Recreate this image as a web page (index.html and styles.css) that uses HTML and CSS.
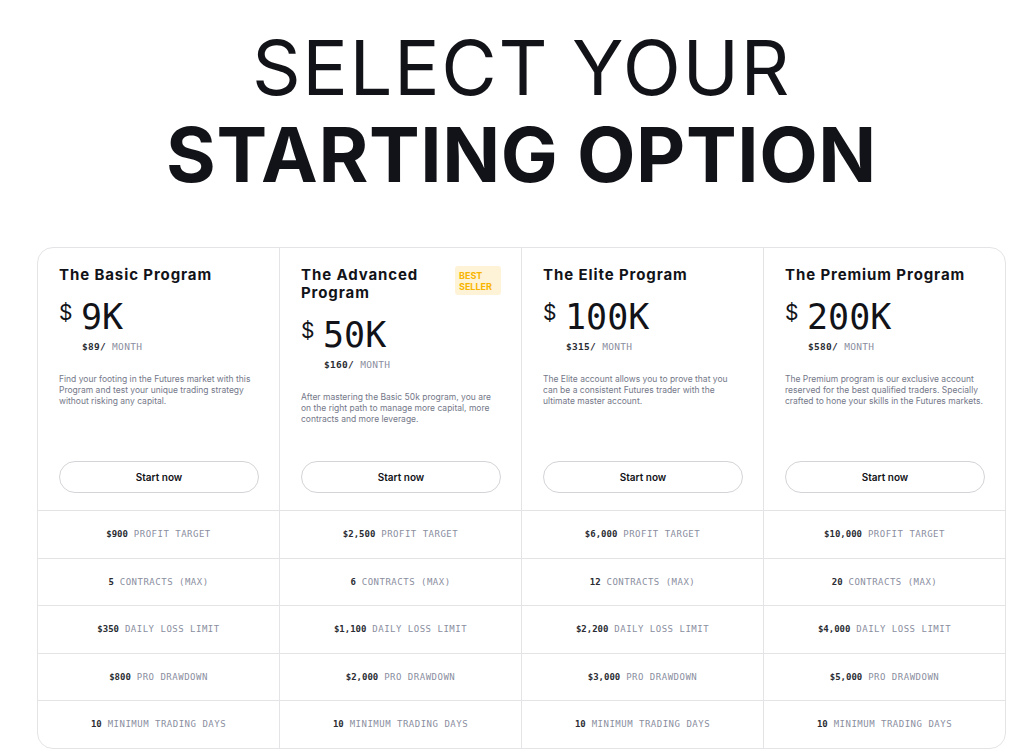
FILE: index.html
```html
<!DOCTYPE html>
<html lang="en">
<head>
<meta charset="utf-8">
<title>Select your starting option</title>
<link rel="stylesheet" href="styles.css">
</head>
<body>
<main class="page">
  <h1 class="hero">
    <span class="hero-light">SELECT YOUR</span>
    <span class="hero-bold">STARTING OPTION</span>
  </h1>

  <section class="plans">
    <article class="plan">
      <div class="plan-head">
        <div class="plan-top">
          <h2 class="plan-title">The Basic Program</h2>
        </div>
        <div class="price"><span class="cur">$</span><span class="amount">9K</span></div>
        <div class="monthly"><b>$89/</b> MONTH</div>
        <p class="desc">Find your footing in the Futures market with this Program and test your unique trading strategy without risking any capital.</p>
        <button class="start">Start now</button>
      </div>
      <div class="row"><b>$900</b> PROFIT TARGET</div>
      <div class="row"><b>5</b> CONTRACTS (MAX)</div>
      <div class="row"><b>$350</b> DAILY LOSS LIMIT</div>
      <div class="row"><b>$800</b> PRO DRAWDOWN</div>
      <div class="row"><b>10</b> MINIMUM TRADING DAYS</div>
    </article>

    <article class="plan">
      <div class="plan-head">
        <div class="plan-top">
          <h2 class="plan-title">The Advanced Program</h2>
          <span class="badge">BEST<br>SELLER</span>
        </div>
        <div class="price"><span class="cur">$</span><span class="amount">50K</span></div>
        <div class="monthly"><b>$160/</b> MONTH</div>
        <p class="desc">After mastering the Basic 50k program, you are on the right path to manage more capital, more contracts and more leverage.</p>
        <button class="start">Start now</button>
      </div>
      <div class="row"><b>$2,500</b> PROFIT TARGET</div>
      <div class="row"><b>6</b> CONTRACTS (MAX)</div>
      <div class="row"><b>$1,100</b> DAILY LOSS LIMIT</div>
      <div class="row"><b>$2,000</b> PRO DRAWDOWN</div>
      <div class="row"><b>10</b> MINIMUM TRADING DAYS</div>
    </article>

    <article class="plan">
      <div class="plan-head">
        <div class="plan-top">
          <h2 class="plan-title">The Elite Program</h2>
        </div>
        <div class="price"><span class="cur">$</span><span class="amount">100K</span></div>
        <div class="monthly"><b>$315/</b> MONTH</div>
        <p class="desc">The Elite account allows you to prove that you can be a consistent Futures trader with the ultimate master account.</p>
        <button class="start">Start now</button>
      </div>
      <div class="row"><b>$6,000</b> PROFIT TARGET</div>
      <div class="row"><b>12</b> CONTRACTS (MAX)</div>
      <div class="row"><b>$2,200</b> DAILY LOSS LIMIT</div>
      <div class="row"><b>$3,000</b> PRO DRAWDOWN</div>
      <div class="row"><b>10</b> MINIMUM TRADING DAYS</div>
    </article>

    <article class="plan">
      <div class="plan-head">
        <div class="plan-top">
          <h2 class="plan-title">The Premium Program</h2>
        </div>
        <div class="price"><span class="cur">$</span><span class="amount">200K</span></div>
        <div class="monthly"><b>$580/</b> MONTH</div>
        <p class="desc">The Premium program is our exclusive account reserved for the best qualified traders. Specially crafted to hone your skills in the Futures markets.</p>
        <button class="start">Start now</button>
      </div>
      <div class="row"><b>$10,000</b> PROFIT TARGET</div>
      <div class="row"><b>20</b> CONTRACTS (MAX)</div>
      <div class="row"><b>$4,000</b> DAILY LOSS LIMIT</div>
      <div class="row"><b>$5,000</b> PRO DRAWDOWN</div>
      <div class="row"><b>10</b> MINIMUM TRADING DAYS</div>
    </article>
  </section>
</main>
</body>
</html>
```

FILE: styles.css
```css
* { box-sizing: border-box; }

html, body {
  margin: 0;
  padding: 0;
  background: #ffffff;
}

body {
  font-family: Inter, "Liberation Sans", sans-serif;
  color: #121318;
}

.page {
  width: 969px;
  margin-left: 37px;
  padding-top: 24px;
}

.hero {
  margin: 0 0 49px;
  text-align: center;
  font-size: 76px;
  line-height: 87px;
  color: #121318;
}

.hero span { display: block; }
.hero-light { font-weight: 400; letter-spacing: 1.6px; }
.hero-bold { font-weight: 700; letter-spacing: 0.6px; }

.plans {
  display: grid;
  grid-template-columns: repeat(4, 1fr);
  border: 1px solid #e4e4e7;
  border-radius: 16px;
  overflow: hidden;
}

.plan {
  display: flex;
  flex-direction: column;
}

.plan + .plan { border-left: 1px solid #e4e4e7; }

.plan-head {
  height: 262px;
  display: flex;
  flex-direction: column;
  padding: 18px 20px 17px 21px;
}

.plan-top {
  display: flex;
  justify-content: space-between;
  align-items: flex-start;
  gap: 10px;
}

.plan-title {
  margin: 0;
  font-size: 15px;
  line-height: 18px;
  font-weight: 700;
  letter-spacing: 0.9px;
}

.badge {
  background: #fff3d7;
  color: #f7b500;
  font-size: 9px;
  line-height: 11px;
  font-weight: 700;
  padding: 4px 5px 4px 4px;
  border-radius: 3px;
  width: 46px;
  height: 29px;
  flex: none;
}

.price {
  display: flex;
  align-items: flex-start;
  margin-top: 13px;
}

.cur {
  width: 22px;
  font-size: 21px;
  line-height: 26px;
  padding-top: 3px;
}

.amount {
  font-family: "DejaVu Sans Mono", "Liberation Mono", monospace;
  font-size: 35px;
  line-height: 40px;
}

.monthly {
  margin: 3px 0 0 23px;
  font-family: "DejaVu Sans Mono", "Liberation Mono", monospace;
  font-size: 9.5px;
  line-height: 14px;
  color: #8a8ea0;
  letter-spacing: 0.3px;
}

.monthly b {
  color: #2a2c33;
  font-weight: 700;
}

.desc {
  margin: 20px 0 0;
  font-size: 8.5px;
  line-height: 11px;
  color: #747889;
}

.start {
  margin-top: auto;
  width: 200px;
  height: 32px;
  border: 1.5px solid #d4d4d8;
  border-radius: 16px;
  background: #ffffff;
  font-family: Inter, "Liberation Sans", sans-serif;
  font-size: 10px;
  font-weight: 600;
  color: #121318;
  cursor: pointer;
}

.row {
  height: 47.5px;
  border-top: 1px solid #e4e4e7;
  display: flex;
  align-items: center;
  justify-content: center;
  font-family: "DejaVu Sans Mono", "Liberation Mono", monospace;
  font-size: 9px;
  letter-spacing: 0.5px;
  color: #8a8ea0;
  white-space: pre;
}

.row b {
  color: #2a2c33;
  font-weight: 700;
  letter-spacing: 0;
}
```
